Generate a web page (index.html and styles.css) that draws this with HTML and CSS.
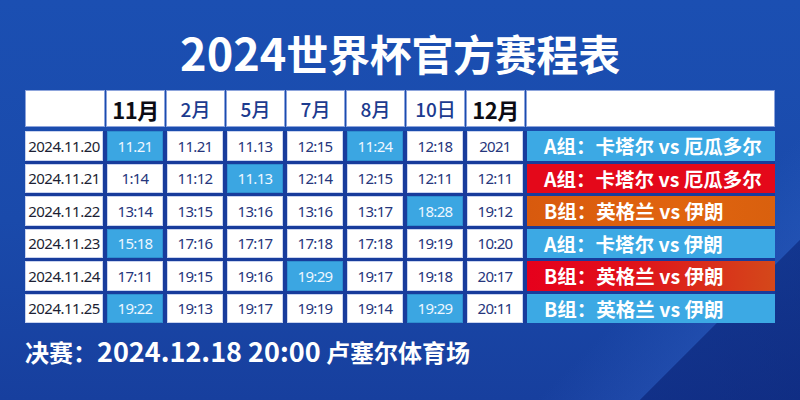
FILE: index.html
```html
<!DOCTYPE html>
<html lang="zh-CN">
<head>
<meta charset="utf-8">
<title>2024世界杯官方赛程表</title>
<link rel="stylesheet" href="styles.css">
</head>
<body>
<div class="page">
  <h1 class="title"><span class="num">2024</span>世界杯官方赛程表</h1>
  <div class="schedule">
    <div class="head-row">
      <div class="hcell"></div>
      <div class="hcell strong">11月</div>
      <div class="hcell">2月</div>
      <div class="hcell">5月</div>
      <div class="hcell">7月</div>
      <div class="hcell">8月</div>
      <div class="hcell">10日</div>
      <div class="hcell strong">12月</div>
      <div class="hcell"></div>
    </div>
    <div class="grid">
      <div class="cell date">2024.11.20</div>
      <div class="cell hl">11.21</div>
      <div class="cell">11.21</div>
      <div class="cell">11.13</div>
      <div class="cell">12:15</div>
      <div class="cell hl">11:24</div>
      <div class="cell">12:18</div>
      <div class="cell">2021</div>
      <div class="match sky">A组：卡塔尔 vs 厄瓜多尔</div>

      <div class="cell date">2024.11.21</div>
      <div class="cell">1:14</div>
      <div class="cell">11:12</div>
      <div class="cell hl">11.13</div>
      <div class="cell">12:14</div>
      <div class="cell">12:15</div>
      <div class="cell">12:11</div>
      <div class="cell">12:11</div>
      <div class="match red">A组：卡塔尔 vs 厄瓜多尔</div>

      <div class="cell date">2024.11.22</div>
      <div class="cell">13:14</div>
      <div class="cell">13:15</div>
      <div class="cell">13:16</div>
      <div class="cell">13:16</div>
      <div class="cell">13:17</div>
      <div class="cell hl">18:28</div>
      <div class="cell">19:12</div>
      <div class="match orange">B组：英格兰 vs 伊朗</div>

      <div class="cell date">2024.11.23</div>
      <div class="cell hl">15:18</div>
      <div class="cell">17:16</div>
      <div class="cell">17:17</div>
      <div class="cell">17:18</div>
      <div class="cell">17:18</div>
      <div class="cell">19:19</div>
      <div class="cell">10:20</div>
      <div class="match sky">A组：卡塔尔 vs 伊朗</div>

      <div class="cell date">2024.11.24</div>
      <div class="cell">17:11</div>
      <div class="cell">19:15</div>
      <div class="cell">19:16</div>
      <div class="cell hl">19:29</div>
      <div class="cell">19:17</div>
      <div class="cell">19:18</div>
      <div class="cell">20:17</div>
      <div class="match redorange">B组：英格兰 vs 伊朗</div>

      <div class="cell date">2024.11.25</div>
      <div class="cell hl">19:22</div>
      <div class="cell">19:13</div>
      <div class="cell">19:17</div>
      <div class="cell">19:19</div>
      <div class="cell">19:14</div>
      <div class="cell hl">19:29</div>
      <div class="cell">20:11</div>
      <div class="match sky">B组：英格兰 vs 伊朗</div>
    </div>
  </div>
  <p class="final">决赛：<span class="num">2024.12.18 20:00</span> 卢塞尔体育场</p>
</div>
</body>
</html>
```
FILE: styles.css
```css
html, body {
  margin: 0;
  padding: 0;
}
body {
  width: 800px;
  height: 400px;
  overflow: hidden;
  font-family: "Noto Sans CJK SC", "Noto Sans", sans-serif;
}
.page {
  width: 800px;
  height: 400px;
  box-sizing: border-box;
  padding: 0 25px;
  background:
    linear-gradient(135deg, rgba(0,0,0,0) 0%, rgba(0,0,0,0) 78%, rgba(60,110,210,0.22) 86.6%, rgba(8,24,100,0.38) 86.7%, rgba(8,24,100,0.45) 100%),
    linear-gradient(180deg, #1b4fb2 0%, #1a4aab 55%, #173f9e 100%);
}
.title {
  margin: 0;
  height: 90px;
  box-sizing: border-box;
  padding-top: 30px;
  text-align: center;
  color: #fff;
  font-size: 42px;
  line-height: 43px;
  font-weight: 700;
  letter-spacing: -0.3px;
}
.title .num {
  font-size: 45px;
  letter-spacing: 0;
}
.head-row {
  display: grid;
  grid-template-columns: 80px repeat(7, 59px) 249px;
  column-gap: 1px;
  height: 37px;
}
.hcell {
  background: #fff;
  box-shadow: inset 0 0 0 1px #8da4dc;
  display: flex;
  align-items: center;
  justify-content: center;
  font-size: 19px;
  font-weight: 500;
  color: #1c3b8f;
}
.hcell.strong {
  font-size: 22px;
  font-weight: 700;
  color: #0c0c14;
  letter-spacing: -0.5px;
}
.grid {
  margin-top: 4px;
  display: grid;
  grid-template-columns: 78px repeat(7, 56px) 248px;
  grid-auto-rows: 29.5px;
  column-gap: 4px;
  row-gap: 3px;
  background: #183c9c;
}
.cell {
  background: #fff;
  box-shadow: inset 0 0 0 1px #c9d3ee;
  display: flex;
  align-items: center;
  justify-content: center;
  font-family: "Noto Sans", "Liberation Sans", sans-serif;
  font-size: 15px;
  letter-spacing: -0.7px;
  color: #26367c;
}
.cell.date {
  color: #1d1f33;
  letter-spacing: -0.5px;
}
.cell.hl {
  background: #3ba6e2;
  box-shadow: inset 0 0 0 1px #2f8fd0;
  color: #eef7ff;
}
.match {
  display: flex;
  align-items: center;
  padding-left: 17px;
  color: #fff;
  font-size: 19.5px;
  font-weight: 700;
  white-space: pre;
}
.match.sky { background: #3ca9e4; }
.match.red { background: #e4081a; }
.match.orange { background: linear-gradient(90deg, #d85a0e, #e0640f 60%, #d9600e); }
.match.redorange { background: linear-gradient(90deg, #e6001c 0%, #e0101a 40%, #d4481a 100%); }
.final {
  margin: 0;
  padding-top: 10px;
  color: #fff;
  font-size: 24px;
  line-height: 36px;
  font-weight: 700;
}
.final .num {
  font-size: 27px;
}
```
